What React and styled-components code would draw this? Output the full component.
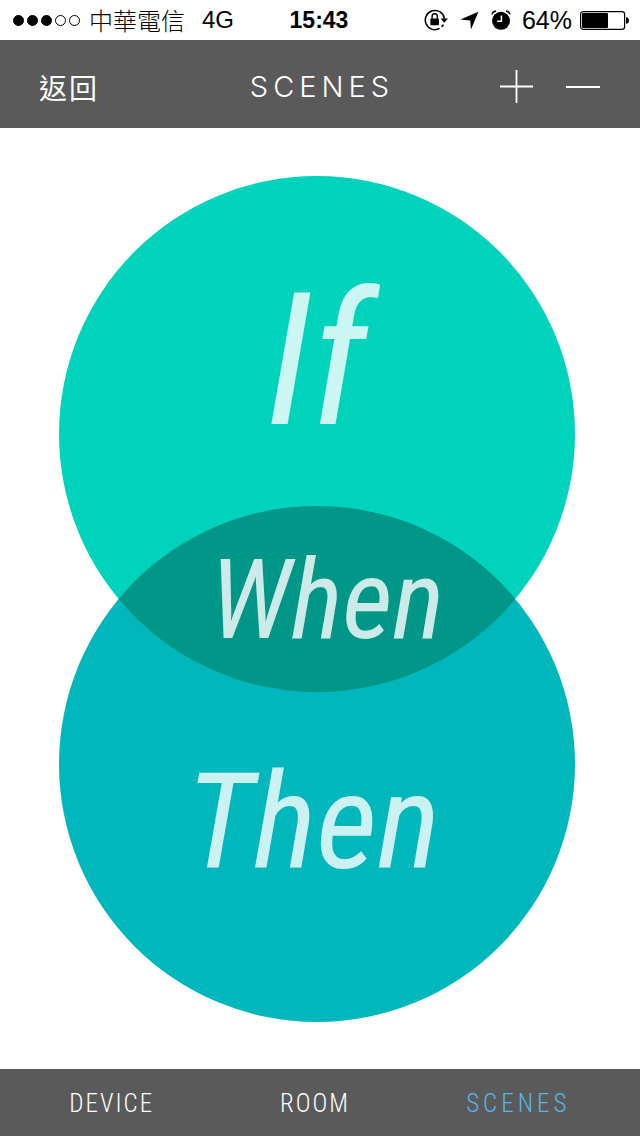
import React from "react";
import styled, { createGlobalStyle } from "styled-components";

const GlobalStyle = createGlobalStyle`
  *, *::before, *::after { box-sizing: border-box; }
  body {
    margin: 0;
    background: #fff;
    font-family: "Liberation Sans", "Noto Sans CJK TC", sans-serif;
  }
`;

const bar = "#5a5a5a";
const narrow = '"Liberation Sans Narrow", "Roboto Condensed", "Liberation Sans", sans-serif';

const Screen = styled.div`
  display: flex;
  flex-direction: column;
  min-height: 100vh;
`;

const StatusBar = styled.div`
  display: grid;
  grid-template-columns: 1fr auto 1fr;
  align-items: center;
  height: 40px;
  padding: 0 11px 0 9px;
  font-size: 24px;
  line-height: 40px;
  color: #000;
`;

const StatusGroup = styled.div`
  display: flex;
  align-items: center;
  justify-content: ${({ $end }) => ($end ? "flex-end" : "flex-start")};
  white-space: nowrap;
`;

const Signal = styled.div`
  display: flex;
  gap: 3px;
  margin: 0 9px 0 4px;
`;

const Dot = styled.span`
  width: 11px;
  height: 11px;
  border: 1px solid #000;
  border-radius: 50%;
  background: ${({ $on }) => ($on ? "#000" : "transparent")};
`;

const Carrier = styled.span`
  font-family: "Noto Sans CJK TC", sans-serif;
  font-weight: 300;
  margin-right: 17px;
`;

const Time = styled.span`
  font-weight: 700;
  font-size: 23px;
`;

const StatusIcon = styled.svg`
  display: block;
  flex: none;
  margin-right: ${({ $gap }) => $gap || 0}px;
`;

const Percent = styled.span`
  font-size: 25px;
  margin-right: 8px;
`;

const Header = styled.header`
  display: grid;
  grid-template-columns: 1fr auto 1fr;
  align-items: center;
  height: 88px;
  padding: 6px 40px 0 39px;
  background: ${bar};
  color: #fff;
`;

const BackButton = styled.button`
  justify-self: start;
  padding: 0;
  border: 0;
  background: none;
  color: inherit;
  font: 400 28px/40px "Noto Sans CJK TC", sans-serif;
  letter-spacing: 2px;
`;

const Title = styled.h1`
  margin: 0;
  padding-left: 5px;
  font: 300 29px/40px Inter, "Liberation Sans", sans-serif;
  letter-spacing: 5px;
`;

const Actions = styled.div`
  display: flex;
  justify-content: flex-end;
  gap: 32px;
`;

const IconButton = styled.button`
  display: block;
  padding: 0;
  border: 0;
  background: none;
  color: inherit;

  svg { display: block; }
`;

const Main = styled.main`
  flex: 1;
  display: flex;
  align-items: center;
  justify-content: center;
  padding: 47px 65px 47px 59px;
`;

const Diagram = styled.div`
  position: relative;
  display: grid;
  grid-template-rows: 330fr 186fr 330fr;
  width: 100%;
  max-width: 680px;
  aspect-ratio: 516 / 846;
`;

const Venn = styled.svg`
  position: absolute;
  inset: 0;
  width: 100%;
  height: 100%;
`;

const SceneButton = styled.button`
  position: relative;
  display: flex;
  align-items: center;
  justify-content: center;
  padding: ${({ $padding }) => $padding || "0"};
  border: 0;
  background: none;
  color: rgba(255, 255, 255, 0.8);
  font-family: ${narrow};
  font-style: italic;
  font-size: ${({ $size }) => $size}px;
  line-height: 1;
`;

const TabBar = styled.nav`
  display: grid;
  grid-template-columns: repeat(3, 1fr);
  align-items: center;
  height: 67px;
  padding: 2px 20px 0 10px;
  background: ${bar};
`;

const Tab = styled.a`
  text-align: center;
  text-decoration: none;
  font: 300 25px/40px ${narrow};
  letter-spacing: ${({ $active }) => ($active ? 4 : 2)}px;
  color: ${({ $active }) => ($active ? "#5ab4e6" : "#fff")};
`;

function RotationLock() {
  return (
    <StatusIcon $gap={12} width="24" height="22" viewBox="0 0 24 22" fill="none">
      <path d="M15.6 19.4A9.6 9.6 0 1 1 20.4 9.6" stroke="#000" strokeWidth="1.5" />
      <path d="M19.4 15.6A9.6 9.6 0 0 1 17.6 17.9" stroke="#000" strokeWidth="1.5" />
      <path d="M16.6 9.6H24l-3.7 4.2z" fill="#000" />
      <rect x="6.4" y="9.4" width="8.6" height="6.8" rx="0.8" fill="#000" />
      <path d="M8.1 10V7.4a2.6 2.6 0 0 1 5.2 0V10" stroke="#000" strokeWidth="1.4" />
    </StatusIcon>
  );
}

function LocationArrow() {
  return (
    <StatusIcon $gap={12} width="19" height="19" viewBox="0 0 19 19">
      <path d="M18.4 0.8L11 18.4L10.2 9.6L0.4 8.4Z" fill="#000" />
    </StatusIcon>
  );
}

function AlarmClock() {
  return (
    <StatusIcon $gap={11} width="20" height="20" viewBox="0 0 20 20" fill="none">
      <circle cx="10" cy="10.8" r="9" fill="#000" />
      <path d="M0.9 4.4Q1.8 1.6 5 1M19.1 4.4Q18.2 1.6 15 1" stroke="#000" strokeWidth="1.4" />
      <path d="M10.4 5.6V11.2H6.2" stroke="#fff" strokeWidth="1.5" />
    </StatusIcon>
  );
}

function Battery() {
  return (
    <StatusIcon width="49" height="20" viewBox="0 0 49 20">
      <rect x="0.6" y="1.6" width="44" height="17.8" rx="2.6" fill="none" stroke="#000" strokeWidth="1.2" />
      <rect x="2" y="3" width="26" height="15" rx="1" fill="#000" />
      <path d="M46 7Q49 7.6 49 10.4T46 13.8Z" fill="#000" />
    </StatusIcon>
  );
}

export default function App() {
  return (
    <Screen>
      <GlobalStyle />
      <StatusBar>
        <StatusGroup>
          <Signal>
            {[true, true, true, false, false].map((on, i) => (
              <Dot key={i} $on={on} />
            ))}
          </Signal>
          <Carrier>中華電信</Carrier>
          <span>4G</span>
        </StatusGroup>
        <Time>15:43</Time>
        <StatusGroup $end>
          <RotationLock />
          <LocationArrow />
          <AlarmClock />
          <Percent>64%</Percent>
          <Battery />
        </StatusGroup>
      </StatusBar>

      <Header>
        <BackButton type="button">返回</BackButton>
        <Title>SCENES</Title>
        <Actions>
          <IconButton type="button" aria-label="Add scene">
            <svg width="34" height="34" viewBox="0 0 34 34" stroke="#fff" strokeWidth="1.8">
              <path d="M0 16.5H33M16.5 0V33" />
            </svg>
          </IconButton>
          <IconButton type="button" aria-label="Remove scene">
            <svg width="34" height="34" viewBox="0 0 34 34" stroke="#fff" strokeWidth="1.8">
              <path d="M0 17H34" />
            </svg>
          </IconButton>
        </Actions>
      </Header>

      <Main>
        <Diagram>
          <Venn viewBox="0 0 516 846" aria-hidden="true">
            <circle cx="258" cy="258" r="258" fill="#00d3bb" />
            <circle cx="258" cy="588" r="258" fill="#00b8bc" />
            <path d="M59.7 423A258 258 0 0 1 456.3 423A258 258 0 0 1 59.7 423Z" fill="#009788" />
          </Venn>
          <SceneButton type="button" $size={184} $padding="40px 0 0">If</SceneButton>
          <SceneButton type="button" $size={110} $padding="4px 0 0 20px">When</SceneButton>
          <SceneButton type="button" $size={134} $padding="0 8px 68px 0">Then</SceneButton>
        </Diagram>
      </Main>

      <TabBar>
        <Tab href="#device">DEVICE</Tab>
        <Tab href="#room">ROOM</Tab>
        <Tab href="#scenes" $active aria-current="page">SCENES</Tab>
      </TabBar>
    </Screen>
  );
}
